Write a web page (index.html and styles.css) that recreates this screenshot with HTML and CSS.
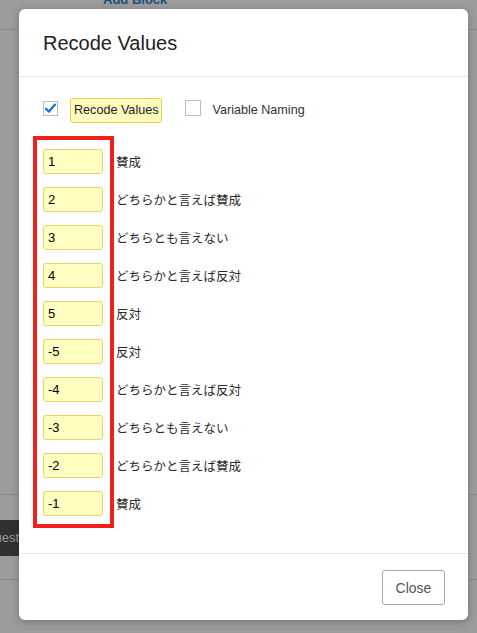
FILE: index.html
```html
<!DOCTYPE html>
<html lang="ja">
<head>
<meta charset="utf-8">
<title>Recode Values</title>
<link rel="stylesheet" href="styles.css">
</head>
<body>
<div class="bg">
  <div class="bg-top"><span class="add-block">Add Block</span></div>
  <div class="bg-gap1"></div>
  <div class="bg-row"><div class="dark-tab">uest</div></div>
  <div class="bg-line2"></div>
</div>

<div class="modal">
  <div class="modal-header"><h2 class="modal-title">Recode Values</h2></div>
  <div class="modal-body">
    <div class="check-row">
      <span class="checkbox checked">
        <svg width="13" height="13" viewBox="0 0 13 13"><path d="M2 6.8 L5 9.6 L11 2.6" fill="none" stroke="#1f74d0" stroke-width="2.3" stroke-linecap="round" stroke-linejoin="round"/></svg>
      </span>
      <span class="check-label active">Recode Values</span>
      <span class="checkbox second"></span>
      <span class="check-label">Variable Naming</span>
    </div>
    <div class="rows">
      <div class="row"><input class="val" value="1"><span class="lbl">賛成</span></div>
      <div class="row"><input class="val" value="2"><span class="lbl">どちらかと言えば賛成</span></div>
      <div class="row"><input class="val" value="3"><span class="lbl">どちらとも言えない</span></div>
      <div class="row"><input class="val" value="4"><span class="lbl">どちらかと言えば反対</span></div>
      <div class="row"><input class="val" value="5"><span class="lbl">反対</span></div>
      <div class="row"><input class="val" value="-5"><span class="lbl">反対</span></div>
      <div class="row"><input class="val" value="-4"><span class="lbl">どちらかと言えば反対</span></div>
      <div class="row"><input class="val" value="-3"><span class="lbl">どちらとも言えない</span></div>
      <div class="row"><input class="val" value="-2"><span class="lbl">どちらかと言えば賛成</span></div>
      <div class="row"><input class="val" value="-1"><span class="lbl">賛成</span></div>
    </div>
    <div class="red-box"></div>
  </div>
  <div class="modal-footer"><button class="btn-close">Close</button></div>
</div>
</body>
</html>
```
FILE: styles.css
```css
html, body {
  margin: 0;
  padding: 0;
}
body {
  width: 477px;
  height: 633px;
  overflow: hidden;
  position: relative;
  background: #9c9c9c;
  font-family: "Liberation Sans", Arial, "Noto Sans CJK JP", sans-serif;
}
.bg {
  display: flex;
  flex-direction: column;
}
.bg-top {
  height: 30px;
  border-bottom: 1px solid #8a8a8a;
  box-sizing: border-box;
  position: relative;
  overflow: hidden;
}
.add-block {
  display: block;
  margin-left: 103px;
  margin-top: -8px;
  font-size: 13px;
  font-weight: bold;
  color: #1e4f78;
}
.bg-gap1 {
  height: 464px;
  border-bottom: 1px solid #8a8a8a;
}
.bg-row {
  height: 85px;
  border-bottom: 1px solid #8a8a8a;
  padding-top: 25px;
  box-sizing: border-box;
}
.dark-tab {
  width: 19px;
  height: 36px;
  background: #313131;
  color: #9a9a9a;
  font-size: 13px;
  line-height: 36px;
  overflow: hidden;
  white-space: nowrap;
  direction: rtl;
  text-align: left;
}
.modal {
  position: absolute;
  left: 19px;
  top: 9px;
  width: 449px;
  height: 611px;
  background: #fff;
  border-radius: 6px;
  box-shadow: 0 2px 8px rgba(0,0,0,0.25);
  display: flex;
  flex-direction: column;
}
.modal-header {
  height: 68px;
  box-sizing: border-box;
  border-bottom: 1px solid #e6e6e6;
  padding: 0 24px;
  display: flex;
  align-items: center;
}
.modal-title {
  margin: 0;
  font-size: 20px;
  font-weight: normal;
  color: #222;
  padding-top: 2px;
}
.modal-body {
  flex: 1;
  position: relative;
  padding: 20px 24px 0;
}
.check-row {
  display: flex;
  align-items: center;
  height: 25px;
  font-size: 13px;
  color: #333;
}
.checkbox {
  width: 15px;
  height: 15px;
  box-sizing: border-box;
  border: 1px solid #bdbdbd;
  background: #fff;
  display: flex;
  align-items: center;
  justify-content: center;
  margin-top: -3px;
}
.checkbox.second {
  width: 16px;
  height: 16px;
  margin-left: 23px;
  margin-right: 11px;
}
.check-label.active {
  margin-left: 12px;
  background: #fffbbf;
  border: 1px solid #e8cf4e;
  border-radius: 3px;
  height: 25px;
  box-sizing: border-box;
  padding: 0 3px;
  line-height: 23px;
  margin-top: 2px;
  color: #222;
  font-size: 12.6px;
}
.check-label {
  font-size: 12.6px;
}
.rows {
  margin-top: 27px;
  display: flex;
  flex-direction: column;
  gap: 13px;
}
.row {
  display: flex;
  align-items: center;
  height: 25px;
}
.val {
  width: 60px;
  height: 25px;
  box-sizing: border-box;
  border: 1px solid #e8d36a;
  border-radius: 3px;
  background: #ffffc1;
  font-family: "Liberation Sans", Arial, sans-serif;
  font-size: 13px;
  color: #000;
  padding: 0 4px;
  margin: 0;
  outline: none;
}
.lbl {
  margin-left: 13px;
  font-size: 12.5px;
  color: #2a2a2a;
  font-family: "Liberation Sans", "Noto Sans CJK JP", sans-serif;
}
.red-box {
  position: absolute;
  left: 14px;
  top: 59px;
  width: 81px;
  height: 392px;
  box-sizing: border-box;
  border: 4px solid #f2201b;
}
.modal-footer {
  height: 67px;
  box-sizing: border-box;
  border-top: 1px solid #e6e6e6;
  display: flex;
  justify-content: flex-end;
  align-items: flex-start;
  padding: 16px 23px 0;
}
.btn-close {
  width: 63px;
  height: 35px;
  border: 1px solid #a8a8a8;
  border-radius: 3px;
  background: #fff;
  color: #555;
  font-family: "Liberation Sans", Arial, sans-serif;
  font-size: 14px;
  padding: 0;
}
```
